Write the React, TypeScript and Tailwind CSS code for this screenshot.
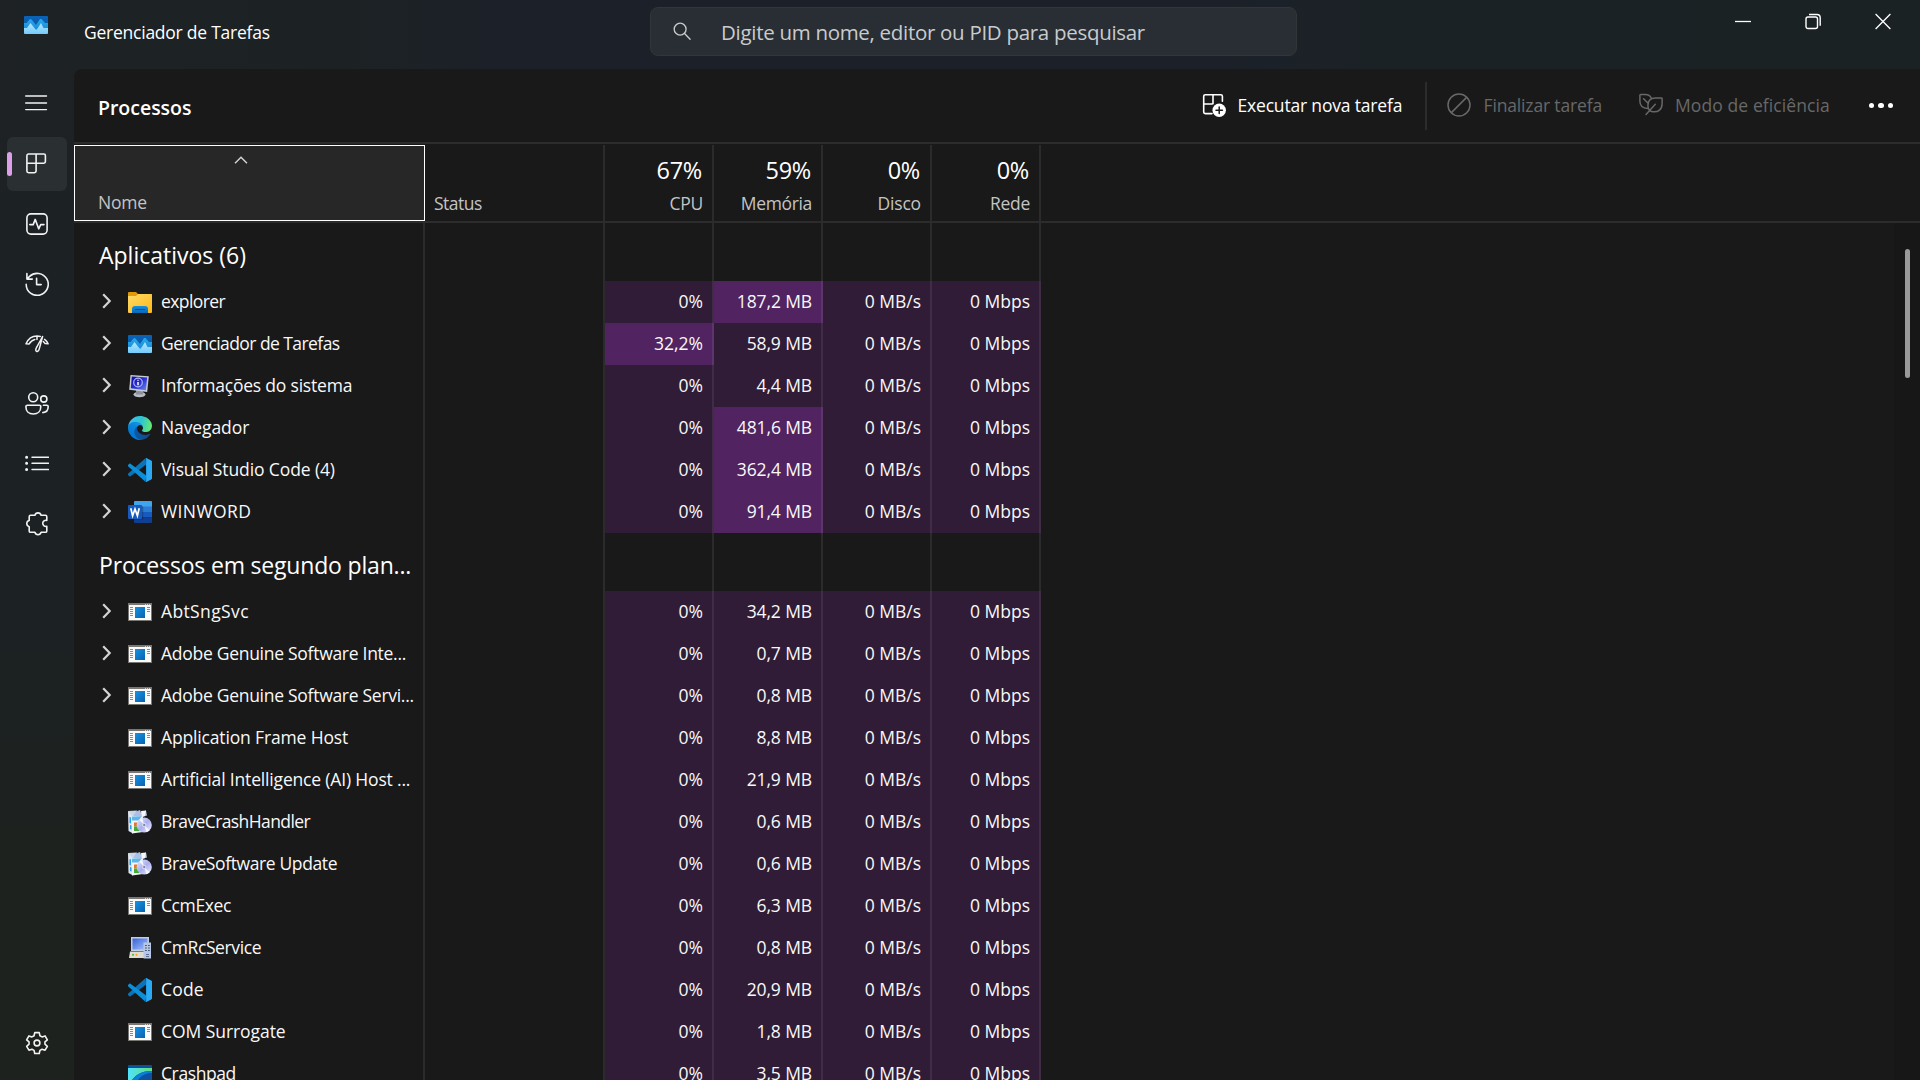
import React from 'react';

/* ---------- Line icons ---------- */

function Line({ children, w = 1.6, className = 'size-6' }: { children: React.ReactNode; w?: number; className?: string }) {
  return (
    <svg viewBox="0 0 24 24" className={`${className} shrink-0`} fill="none" stroke="currentColor" strokeWidth={w} strokeLinecap="round" strokeLinejoin="round">
      {children}
    </svg>
  );
}

const MenuIcon = () => (
  <Line w={1.4}><path d="M.7 4h20.8M.7 11h20.8M.7 17.6h20.8" /></Line>
);
const ProcessesIcon = () => (
  <Line>
    <path d="M3.5 2h15.3a1.6 1.6 0 0 1 1.6 1.6v6a1.6 1.6 0 0 1-1.6 1.6h-7.7v7.9a1.6 1.6 0 0 1-1.6 1.6h-6a1.6 1.6 0 0 1-1.6-1.6V3.6A1.6 1.6 0 0 1 3.5 2zM11.1 2v9.2M1.9 11.2h9.2" />
  </Line>
);
const PerformanceIcon = () => (
  <Line>
    <rect x="1.9" y="1.9" width="20.2" height="20.2" rx="4" />
    <path d="M4.8 12.6h3.4l2-5.2 3.5 9.4 2-4.2h3.3" />
  </Line>
);
const HistoryIcon = () => (
  <Line>
    <path d="M1.2 12.4A11 11 0 1 0 4.6 4.4L2 7M1.9 1.6V7.1h5.4M11.6 6.4v6.2h4.6" />
  </Line>
);
const StartupIcon = () => (
  <Line w={1.5}>
    <path d="M1 11.8C3.2 6.8 7.2 4 12 4c1.2 0 2.300.1 3.300.5M1 11.8l3.200.1C5.600 9.400 7.600 8 9.800 7.500M12 4v3.600M17.600 4.500 11.200 16.200c-1.100 2.500.200 3.600 1.500 3.100 1-.4 1.300-1.400 1.500-2.200zM19.600 7.400c1.600 1.100 2.700 2.600 3.500 4.400l-3-.300-1.800-2" />
  </Line>
);
const UsersIcon = () => (
  <Line>
    <circle cx="8.200" cy="5.300" r="4.500" />
    <circle cx="18.800" cy="7" r="3.100" />
    <path d="M2.500 13.200h11.800a1.500 1.500 0 0 1 1.500 1.500c0 4.200-2.800 7.300-7.500 7.300S.9 18.900.9 14.700a1.500 1.500 0 0 1 1.600-1.500zM18.400 13.200h3.400a1.400 1.400 0 0 1 1.400 1.400c0 3.700-2 5.900-5.400 6" />
  </Line>
);
const DetailsIcon = () => (
  <Line w={1.5}>
    <path d="M7 5.300h16.500M7 11.300h16.500M7 17.600h16.500" />
    <path d="M1.600 5.300h.01M1.600 11.300h.01M1.600 17.600h.01" strokeWidth="3" />
  </Line>
);
const ServicesIcon = () => (
  <Line>
    <path d="M5.600 3.300h4.300a3.200 3.200 0 0 1 6.200 0h4.300a1.400 1.400 0 0 1 1.400 1.400v3.700a3.100 3.100 0 1 0 0 5.900v4.600a1.400 1.400 0 0 1-1.400 1.400h-4.300a3.200 3.200 0 0 1-6.200 0H5.600a1.400 1.400 0 0 1-1.400-1.400v-4.200a3.200 3.200 0 0 1 0-6.200V4.700a1.400 1.400 0 0 1 1.400-1.400z" />
  </Line>
);
const SettingsIcon = () => (
  <Line>
    <circle cx="12" cy="12" r="2.900" />
    <path d="M9.750 1.600h4.500l.7 3.100 2.100 1.200 3-1 2.300 3.900-2.400 2.100v2.300l2.400 2.100-2.300 3.900-3-1-2.100 1.200-.7 3.100h-4.500l-.7-3.100-2.100-1.200-3 1-2.300-3.900 2.400-2.100v-2.300L1.650 8.800l2.300-3.900 3 1 2.100-1.200z" />
  </Line>
);
const NewTaskIcon = () => (
  <Line>
    <path d="M10 20.600H3.300A1.600 1.600 0 0 1 1.700 19V3.300a1.600 1.600 0 0 1 1.600-1.600h15.500a1.600 1.600 0 0 1 1.600 1.600v5M11 1.700v9M1.700 11h8.500" />
    <circle cx="17.200" cy="17.200" r="6.700" fill="currentColor" stroke="none" />
    <path d="M17.200 14v6.400M14 17.200h6.400" stroke="#191919" strokeWidth="1.500" />
  </Line>
);
const EndTaskIcon = () => (
  <Line w={1.5}><circle cx="12" cy="12" r="11" /><path d="M4.400 19.600 19.600 4.400" /></Line>
);
const EfficiencyIcon = () => (
  <Line w={1.5}>
    <path d="M8.600 15.400C3.500 15.400.9 12.600.9 8.300V2.400a.8.8 0 0 1 .8-.8h4.500c3 0 5.100 1.300 6.100 3.600M4.600 5.800l4.700 4.800M22.300 4.900h-6c-4.600 0-7.400 2.900-7.400 7.300 0 3.300 1.800 6 4.700 6.500 5.600.9 9.500-2.300 9.500-8V5.700a.8.8 0 0 0-.8-.8zM16.300 11.300 7 21.500" />
  </Line>
);
const SearchIcon = () => (
  <Line w={1.7} className="size-[19px]"><circle cx="9" cy="9" r="7.500" /><path d="m14.600 14.600 7 7.200" /></Line>
);

function Chevron() {
  return (
    <svg viewBox="0 0 10 16" className="h-4 w-2.5 shrink-0" fill="none" stroke="#d4d4d4" strokeWidth="2.200">
      <path d="m1.200 1.200 6.500 6.800-6.500 6.800" />
    </svg>
  );
}

/* ---------- Application icons ---------- */

function TaskManagerIcon() {
  return (
    <svg viewBox="0 0 24 18" className="h-[18px] w-6 shrink-0">
      <defs>
        <linearGradient id="tmBack" x1="0" y1="0" x2="0" y2="1"><stop stopColor="#0a63b8" /><stop offset="1" stopColor="#0a4f97" /></linearGradient>
        <linearGradient id="tmMid" x1="0" y1="0" x2="0" y2="1"><stop stopColor="#28a8ea" /><stop offset="1" stopColor="#1583d0" /></linearGradient>
        <linearGradient id="tmFront" x1="0" y1="0" x2="0" y2="1"><stop stopColor="#b4e4ff" /><stop offset="1" stopColor="#72cbfb" /></linearGradient>
      </defs>
      <rect width="24" height="18" rx="1" fill="url(#tmBack)" />
      <path d="M0 7h2.500L6 3l1.500.5L12 9l4-6 1.500 0L21 7h3v10H0z" fill="url(#tmMid)" />
      <path d="M0 12h3l3.500-5L10 11.500l2.200 2.500 2-2.500L17 7l2.500 5H24v5a1 1 0 0 1-1 1H1a1 1 0 0 1-1-1z" fill="url(#tmFront)" />
    </svg>
  );
}

function FolderIcon() {
  return (
    <svg viewBox="0 0 24 24" className="size-6 shrink-0">
      <defs>
        <linearGradient id="fdBody" x1="0" y1="0" x2="1" y2="1"><stop stopColor="#ffd969" /><stop offset="1" stopColor="#fbb917" /></linearGradient>
        <linearGradient id="fdTray" x1="0" y1="0" x2="0" y2="1"><stop stopColor="#1490df" /><stop offset="1" stopColor="#0a67b9" /></linearGradient>
      </defs>
      <path d="M0 3a1 1 0 0 1 1-1h7l2 2h13a1 1 0 0 1 1 1v6H0z" fill="#e09a07" />
      <path d="M0 6h8l2-2h13a1 1 0 0 1 1 1v17a1 1 0 0 1-1 1H1a1 1 0 0 1-1-1z" fill="url(#fdBody)" />
      <path d="M4 23v-4a3 3 0 0 1 3-3h10a3 3 0 0 1 3 3v4z" fill="url(#fdTray)" />
      <path d="M7 19.500h10" stroke="#074f93" strokeWidth="1" />
    </svg>
  );
}

function SystemInfoIcon() {
  return (
    <svg viewBox="0 0 24 24" className="size-6 shrink-0">
      <defs>
        <linearGradient id="siScreen" x1="0" y1="0" x2="1" y2="1"><stop stopColor="#1408a0" /><stop offset=".5" stopColor="#2a2fd0" /><stop offset="1" stopColor="#6f8cf5" /></linearGradient>
      </defs>
      <ellipse cx="11.500" cy="20.500" rx="6" ry="2.800" fill="#b9bcc2" />
      <path d="M8 16h7v4.500H8z" fill="#8e9198" />
      <path d="M2.500 1 20.800 2.200 19.200 18 1.200 15.800z" fill="#c9ccd2" />
      <path d="M3.800 2.500 19.200 3.500 17.900 16.200 2.800 14.300z" fill="url(#siScreen)" />
      <circle cx="10" cy="8.500" r="4.300" fill="none" stroke="#a9b6ff" strokeWidth="1.200" />
      <path d="M10 8v3.200M10 5.800v.9" stroke="#fff" strokeWidth="1.500" />
    </svg>
  );
}

function EdgeIcon() {
  return (
    <svg viewBox="0 0 256 256" className="size-6 shrink-0">
      <defs>
        <linearGradient id="edA" x1="63" y1="177" x2="241" y2="177" gradientUnits="userSpaceOnUse"><stop stopColor="#0c59a4" /><stop offset="1" stopColor="#114a8b" /></linearGradient>
        <linearGradient id="edB" x1="157" y1="80" x2="46" y2="220" gradientUnits="userSpaceOnUse"><stop stopColor="#1b9de2" /><stop offset=".4" stopColor="#0c86dc" /><stop offset="1" stopColor="#0078d4" /></linearGradient>
        <linearGradient id="edC" x1="20" y1="60" x2="250" y2="120" gradientUnits="userSpaceOnUse"><stop stopColor="#35c1f1" /><stop offset=".5" stopColor="#2fc4cf" /><stop offset="1" stopColor="#66eb6e" /></linearGradient>
      </defs>
      <path d="M231 190.500a94 94 0 0 1-10.500 4.700 102 102 0 0 1-36 6.400c-47.300 0-88.500-32.500-88.500-74.300a31.500 31.500 0 0 1 16.400-27.300c-42.800 1.800-53.800 46.400-53.800 72.500 0 74 68.100 81.400 82.800 81.400 7.900 0 19.800-2.300 27-4.600l1.300-.4a128.300 128.300 0 0 0 66.600-52.800 4 4 0 0 0-5.300-5.600z" fill="url(#edA)" />
      <path d="M105.700 241.400a79.200 79.200 0 0 1-22.700-21.300 80.700 80.700 0 0 1 29.500-120c3.200-1.500 8.500-4.100 15.600-4a32.400 32.400 0 0 1 25.700 13 31.900 31.900 0 0 1 6.300 18.700c0-.2 24.500-79.600-80-79.600-43.900 0-80 41.700-80 78.200a130.200 130.200 0 0 0 12.100 56 128 128 0 0 0 156.400 67 75.500 75.500 0 0 1-62.800-8z" fill="url(#edB)" />
      <path d="M152.300 148.900c-.9 1-3.400 2.500-3.400 5.600 0 2.600 1.700 5.200 4.800 7.300 14.300 10 41.400 8.600 41.500 8.600a59.600 59.600 0 0 0 30.300-8.300 61.400 61.400 0 0 0 30.400-52.900c.3-22.400-8-37.300-11.300-43.900C223.500 23.900 177.700 0 128 0A128 128 0 0 0 0 126.200c.5-36.500 36.800-66 80-66 3.500 0 23.500.3 42 10a72.600 72.600 0 0 1 30.900 29.300c6.100 10.600 7.200 24.100 7.200 29.500s-2.700 13.300-7.800 19.900z" fill="url(#edC)" />
    </svg>
  );
}

function VsCodeIcon() {
  return (
    <svg viewBox="0 0 24 24" className="size-6 shrink-0">
      <path d="M17.400.2 0 15.800c-.4.4-.3.900 0 1.200l1.300 1.200c.4.3.8.300 1.200 0L18.500 6.300z" fill="#0a74ba" />
      <path d="M17.400 23.800 0 8.200C-.3 7.800-.3 7.300 0 7l1.300-1.200c.4-.3.8-.3 1.200 0l16 11.900z" fill="#0a8fd8" />
      <path d="M17.300.2c.3-.2.700-.2 1-.1l4.900 2.400c.5.200.8.700.8 1.300v16.400c0 .6-.3 1.100-.8 1.300l-4.900 2.400c-.5.200-1.100.1-1.500-.3.500.5 1.300.1 1.300-.6V1c0-.7-.8-1.100-1.300-.600z" fill="#2aaaf5" />
    </svg>
  );
}

function WordIcon() {
  return (
    <svg viewBox="0 0 24 24" className="size-6 shrink-0">
      <path d="M7 1h16a1 1 0 0 1 1 1v5H6V2a1 1 0 0 1 1-1z" fill="#41a5ee" />
      <path d="M6 6.500h18V12H6z" fill="#2b7cd3" />
      <path d="M6 12h18v5.500H6z" fill="#185abd" />
      <path d="M6 17.500h18V22a1 1 0 0 1-1 1H7a1 1 0 0 1-1-1z" fill="#103f91" />
      <path d="M6 6h8.200a1 1 0 0 1 1 1v12.500H6z" fill="#000" opacity=".25" />
      <rect y="5" width="14" height="14" rx="1" fill="#185abd" />
      <path d="m2.800 8.300 1.800 7.400L7 9l2.400 6.700 1.800-7.400" fill="none" stroke="#fff" strokeWidth="1.700" />
    </svg>
  );
}

function GenericIcon() {
  return (
    <svg viewBox="0 0 24 18" className="h-[18px] w-6 shrink-0">
      <defs>
        <linearGradient id="gnBox" x1="0" y1="0" x2="1" y2="1"><stop stopColor="#1592e2" /><stop offset="1" stopColor="#0962b0" /></linearGradient>
      </defs>
      <rect width="24" height="18" fill="#787774" />
      <rect x="1" y="2" width="22" height="15" fill="#fafafa" />
      <path d="M17 1.500h1M19 1.500h1M21 1.500h1" stroke="#d0d0d0" />
      <path d="M2 4.500h3M2 6.500h3M2 8.500h3M2 10.500h3M2 12.500h3M19 4.500h3M19 6.500h3M19 8.500h3" stroke="#8a8a8a" />
      <rect x="7" y="4" width="10" height="11" fill="url(#gnBox)" />
    </svg>
  );
}

function InstallerIcon() {
  return (
    <svg viewBox="0 0 24 24" className="size-6 shrink-0">
      <defs>
        <linearGradient id="inCd" x1="0" y1="0" x2="1" y2="1"><stop stopColor="#e9ecff" /><stop offset=".5" stopColor="#a9aef0" /><stop offset="1" stopColor="#f1f3ff" /></linearGradient>
      </defs>
      <path d="M0 1 5 3v20.500L.5 21z" fill="#dfe6ee" />
      <path d="M4 4h11v18l-11 1.500z" fill="#f2f5f8" />
      <path d="M0 1 9 .5 8 4 4.500 6z" fill="#c8d6ea" />
      <path d="M8 1.500 12 0l1 2.500L18 .5l1 5-5 1.500-9-1z" fill="#aebfe2" />
      <path d="M13 1 18 .5 17 6l-3 1z" fill="#f4f6fa" />
      <path d="M4 6.500h9l-1 4H4z" fill="#5db7ee" />
      <path d="M1.500 7 3 7.500v6l-1.500-.5zM2 15l1.500.5v4L2 19z" fill="#2f9be6" />
      <path d="M6 12.500h4.500v4H6z" fill="#e8742c" />
      <path d="M6 16.500h5v4.500H6z" fill="#42ad35" />
      <circle cx="16.200" cy="15" r="7.600" fill="url(#inCd)" />
      <path d="m16.200 15-5-5.300a7.300 7.300 0 0 1 3-2zM16.200 15l5.500 5.200a7.500 7.500 0 0 1-3.300 2z" fill="#fff" opacity=".8" />
      <circle cx="16.200" cy="15" r="2.300" fill="#d5d8ea" />
      <circle cx="16.200" cy="15" r="1.100" fill="#7378a8" />
    </svg>
  );
}

function ComputerIcon() {
  return (
    <svg viewBox="0 0 24 24" className="size-6 shrink-0">
      <defs>
        <linearGradient id="cpScreen" x1="0" y1="0" x2="1" y2="1"><stop stopColor="#3560d8" /><stop offset="1" stopColor="#a9c5fb" /></linearGradient>
      </defs>
      <path d="M3 1h18v14H3z" fill="#c4cee0" />
      <path d="M4.500 2.500h15v11h-15z" fill="url(#cpScreen)" />
      <path d="M2 15.500h15l1 6.500H1z" fill="#dcdcd2" />
      <circle cx="5" cy="18.800" r="1.100" fill="#5cba2c" />
      <circle cx="8.500" cy="18.800" r="1.100" fill="#f0a91c" />
      <path d="M15.500 6.500h7.500v16h-7.500z" fill="#b7c6e2" />
      <path d="M17 9.500h1.800M20 9.500h1.800M17 12h1.800M20 12h1.800M17 14.500h1.800M20 14.500h1.800" stroke="#41527c" strokeWidth="1.200" />
      <path d="M18 18.500h3M18 20.500h3" stroke="#5d6f9c" strokeWidth="1.200" />
    </svg>
  );
}

function CrashpadIcon() {
  return (
    <svg viewBox="0 0 24 18" className="h-[18px] w-6 shrink-0">
      <defs>
        <linearGradient id="crSky" x1="0" y1="0" x2="1" y2="0"><stop stopColor="#4fe3fb" /><stop offset="1" stopColor="#62dd7c" /></linearGradient>
      </defs>
      <rect width="24" height="18" rx="1" fill="#0b4fa0" />
      <path d="M0 3h24v3C14 6 9 9 4 15H0z" fill="url(#crSky)" />
      <path d="M4 15C9 9 14 6 24 6v2C15 8.500 11 13 8.500 18H2z" fill="#0a7fd6" />
      <path d="M24 8C15 8.500 11 13 8.500 18H24z" fill="#0d51a2" />
    </svg>
  );
}

/* ---------- Data ---------- */

type Row = {
  name: string;
  track: string;
  icon: () => React.JSX.Element;
  expandable?: boolean;
  cpu?: string;
  mem: string;
  hotCpu?: boolean;
  hotMem?: boolean;
};

const apps: Row[] = [
  { name: 'explorer', track: 'tracking-[-0.6px]', icon: FolderIcon, expandable: true, mem: '187,2 MB', hotMem: true },
  { name: 'Gerenciador de Tarefas', track: 'tracking-[-0.57px]', icon: TaskManagerIcon, expandable: true, cpu: '32,2%', mem: '58,9 MB', hotCpu: true },
  { name: 'Informações do sistema', track: 'tracking-[-0.2px]', icon: SystemInfoIcon, expandable: true, mem: '4,4 MB' },
  { name: 'Navegador', track: 'tracking-[-0.1px]', icon: EdgeIcon, expandable: true, mem: '481,6 MB', hotMem: true },
  { name: 'Visual Studio Code (4)', track: 'tracking-[-0.11px]', icon: VsCodeIcon, expandable: true, mem: '362,4 MB', hotMem: true },
  { name: 'WINWORD', track: 'tracking-[0.4px]', icon: WordIcon, expandable: true, mem: '91,4 MB', hotMem: true },
];

const background: Row[] = [
  { name: 'AbtSngSvc', track: 'tracking-[0.37px]', icon: GenericIcon, expandable: true, mem: '34,2 MB' },
  { name: 'Adobe Genuine Software Inte...', track: 'tracking-[-0.28px]', icon: GenericIcon, expandable: true, mem: '0,7 MB' },
  { name: 'Adobe Genuine Software Servi...', track: 'tracking-[-0.28px]', icon: GenericIcon, expandable: true, mem: '0,8 MB' },
  { name: 'Application Frame Host', track: 'tracking-[-0.15px]', icon: GenericIcon, mem: '8,8 MB' },
  { name: 'Artificial Intelligence (AI) Host ...', track: 'tracking-[-0.17px]', icon: GenericIcon, mem: '21,9 MB' },
  { name: 'BraveCrashHandler', track: 'tracking-[-0.6px]', icon: InstallerIcon, mem: '0,6 MB' },
  { name: 'BraveSoftware Update', track: 'tracking-[-0.38px]', icon: InstallerIcon, mem: '0,6 MB' },
  { name: 'CcmExec', track: 'tracking-[-0.4px]', icon: GenericIcon, mem: '6,3 MB' },
  { name: 'CmRcService', track: 'tracking-[-0.38px]', icon: ComputerIcon, mem: '0,8 MB' },
  { name: 'Code', track: 'tracking-[0.2px]', icon: VsCodeIcon, mem: '20,9 MB' },
  { name: 'COM Surrogate', track: 'tracking-[-0.06px]', icon: GenericIcon, mem: '1,8 MB' },
  { name: 'Crashpad', track: 'tracking-[-0.4px]', icon: CrashpadIcon, mem: '3,5 MB' },
];

const columns = [
  { value: '67%', label: 'CPU', track: 'tracking-[-0.3px]' },
  { value: '59%', label: 'Memória', track: 'tracking-[-0.35px]' },
  { value: '0%', label: 'Disco', track: 'tracking-[-0.15px]' },
  { value: '0%', label: 'Rede', track: 'tracking-[-0.3px]' },
];

/* ---------- Table ---------- */

const GRID = 'grid grid-cols-[351px_180px_109px_109px_109px_109px] shrink-0';

function Cell({ children, hot, track = 'tracking-normal' }: { children: string; hot?: boolean; track?: string }) {
  return (
    <div className={`flex items-center justify-end border-r-2 border-white/8 pr-[9px] pb-[3px] ${track} ${hot ? 'bg-[#512361]' : 'bg-[#301c36]'}`}>{children}</div>
  );
}

function ProcessRow({ row }: { row: Row }) {
  const Icon = row.icon;
  return (
    <div className={`${GRID} h-[42px] text-[17.5px] leading-6 text-[#f8f8f8]`}>
      <div className="flex items-center overflow-hidden border-r-2 border-white/8 pl-7 whitespace-nowrap">
        <div className="-mt-0.5 flex w-[26px]">{row.expandable && <Chevron />}</div>
        <div className="flex w-6 items-center"><Icon /></div>
        <span className={`pb-[3px] pl-[9px] ${row.track}`}>{row.name}</span>
      </div>
      <div className="border-r-2 border-white/8" />
      <Cell hot={row.hotCpu}>{row.cpu ?? '0%'}</Cell>
      <Cell hot={row.hotMem} track="tracking-[-0.12px]">{row.mem}</Cell>
      <Cell>0 MB/s</Cell>
      <Cell>0 Mbps</Cell>
    </div>
  );
}

function GroupRow({ title, track }: { title: string; track: string }) {
  return (
    <div className={`${GRID} h-[58px]`}>
      <div className={`flex items-center border-r-2 border-white/8 pt-1.5 pl-[25px] text-[23px] leading-8 whitespace-nowrap text-white ${track}`}>{title}</div>
      {[0, 1, 2, 3, 4].map((i) => <div key={i} className="border-r-2 border-white/8" />)}
    </div>
  );
}

function TableHeader() {
  return (
    <div className={`${GRID} h-[76px] text-[17.5px] leading-6 text-[#c4c4c4]`}>
      <div className="flex flex-col border border-white bg-[#272727] pl-[23px]">
        <svg viewBox="0 0 14 8" className="mt-2.5 mr-[41px] h-2 w-3.5 self-center" fill="none" stroke="#cfcfcf" strokeWidth="1.500"><path d="m1 7.200 6-6 6 6" /></svg>
        <span className="mt-auto mb-1.5 tracking-[-0.2px]">Nome</span>
      </div>
      <div className="flex items-end border-r-2 border-white/8 pb-1.5 pl-[9px] tracking-[-0.5px]">Status</div>
      {columns.map((c) => (
        <div key={c.label} className="flex flex-col items-end justify-end border-r-2 border-white/8 pr-[9px] pb-1.5">
          <span className="pr-px text-[23.5px] leading-8 tracking-[-0.3px] text-white">{c.value}</span>
          <span className={`mt-[5px] ${c.track}`}>{c.label}</span>
        </div>
      ))}
    </div>
  );
}

/* ---------- Shell ---------- */

const nav = [MenuIcon, ProcessesIcon, PerformanceIcon, HistoryIcon, StartupIcon, UsersIcon, DetailsIcon, ServicesIcon];

function Sidebar() {
  return (
    <nav className="flex w-[74px] shrink-0 flex-col pt-[5px] pb-[7px] text-[#f2f2f2]">
      {nav.map((Icon, i) => (
        <div key={i} className="flex h-[60px] items-center pl-[7px]">
          <div className={`relative flex h-[54px] w-[60px] items-center rounded-md pl-[18px] ${i === 1 ? 'bg-[#2a2f32]' : ''}`}>
            {i === 1 && <span className="absolute left-0 h-6 w-[5px] rounded-full bg-[#dd9fe8]" />}
            <Icon />
          </div>
        </div>
      ))}
      <div className="mt-auto flex h-[60px] items-center pl-[25px]"><SettingsIcon /></div>
    </nav>
  );
}

function TitleBar() {
  return (
    <header className="flex h-[69px] shrink-0 items-start">
      <div className="flex w-[650px] items-start pl-6">
        <div className="pt-4"><TaskManagerIcon /></div>
        <span className="ml-9 pt-5 text-[17.5px] leading-6 tracking-[-0.24px] text-white">Gerenciador de Tarefas</span>
      </div>
      <div className="mt-[7px] flex h-[49px] w-[647px] items-center rounded-lg border border-[#30363a] bg-[#282e34] pl-[22px] text-[#c9cbcd]">
        <SearchIcon />
        <span className="ml-[29px] text-[20.5px] leading-7 tracking-[-0.3px]">Digite um nome, editor ou PID para pesquisar</span>
      </div>
      <div className="ml-auto flex items-center gap-[54px] pt-[13px] pr-[29px] text-white">
        <svg viewBox="0 0 16 17" className="h-[17px] w-4" fill="none" stroke="currentColor" strokeWidth="1.300"><path d="M0 8.500h16" /></svg>
        <svg viewBox="0 0 16 17" className="h-[17px] w-4" fill="none" stroke="currentColor" strokeWidth="1.400"><rect x="1" y="4" width="11.500" height="11.500" rx="2" /><path d="M4 1.500h8a3.200 3.200 0 0 1 3.200 3.200v8" /></svg>
        <svg viewBox="0 0 16 17" className="h-[17px] w-4" fill="none" stroke="currentColor" strokeWidth="1.300"><path d="m.6 1 14.800 15M15.400 1 .6 16" /></svg>
      </div>
    </header>
  );
}

function Toolbar() {
  return (
    <div className="flex h-[73px] shrink-0 items-center text-[17.5px] leading-6 text-white">
      <h1 className="pt-1 pl-6 text-[19.5px] font-semibold tracking-[-0.02px]">Processos</h1>
      <div className="ml-auto flex items-center">
        <div className="-mt-0.5 flex"><NewTaskIcon /></div>
        <span className="-mt-0.5 ml-3 w-[187px] tracking-[-0.18px] whitespace-nowrap">Executar nova tarefa</span>
        <span className="h-12 w-0.5 bg-[#2c2c2c]" />
        <div className="-mt-0.5 ml-5 flex w-[192px] items-center text-[#686868]">
          <EndTaskIcon />
          <span className="ml-[13px] tracking-[-0.15px] whitespace-nowrap">Finalizar tarefa</span>
        </div>
        <div className="-mt-0.5 flex w-[230px] items-center text-[#686868]">
          <EfficiencyIcon />
          <span className="ml-[12.500px] tracking-[0.1px] whitespace-nowrap">Modo de eficiência</span>
        </div>
        <div className="mr-[27px] flex gap-[4px]">
          <span className="size-[5.500px] rounded-full bg-white" />
          <span className="size-[5.500px] rounded-full bg-white" />
          <span className="size-[5.500px] rounded-full bg-white" />
        </div>
      </div>
    </div>
  );
}

export default function App() {
  return (
    <div className="flex h-screen w-full flex-col overflow-hidden bg-[linear-gradient(180deg,#1e2224_0%,#1c2125_30%,#1c2123_60%,#1e221e_80%,#1e221e_100%)] font-['Open_Sans',sans-serif]">
      <div className="bg-[linear-gradient(90deg,#1e2224_0%,#1c2224_18%,#1c2129_25%,#1c2129_64%,#1b2226_72%,#1b2224_100%)]"><TitleBar /></div>
      <div className="flex min-h-0 flex-1">
        <Sidebar />
        <main className="flex min-w-0 flex-1 flex-col overflow-hidden rounded-tl-lg bg-[#191919]">
          <Toolbar />
          <div className="mb-px h-0.5 shrink-0 bg-[#2c2c2c]" />
          <TableHeader />
          <div className="h-0.5 shrink-0 bg-[#2c2c2c]" />
          <div className="flex min-h-0 flex-1 overflow-hidden">
            <div className="flex flex-col">
              <GroupRow title="Aplicativos (6)" track="tracking-normal" />
              {apps.map((r) => <ProcessRow key={r.name} row={r} />)}
              <GroupRow title="Processos em segundo plan..." track="tracking-[-0.18px]" />
              {background.map((r) => <ProcessRow key={r.name} row={r} />)}
            </div>
            <div className="ml-auto w-[26px] bg-[#171717] pt-[26px] pl-[11px]">
              <div className="h-[129px] w-[5px] rounded-full bg-[#9a9a9a]" />
            </div>
          </div>
        </main>
      </div>
    </div>
  );
}
